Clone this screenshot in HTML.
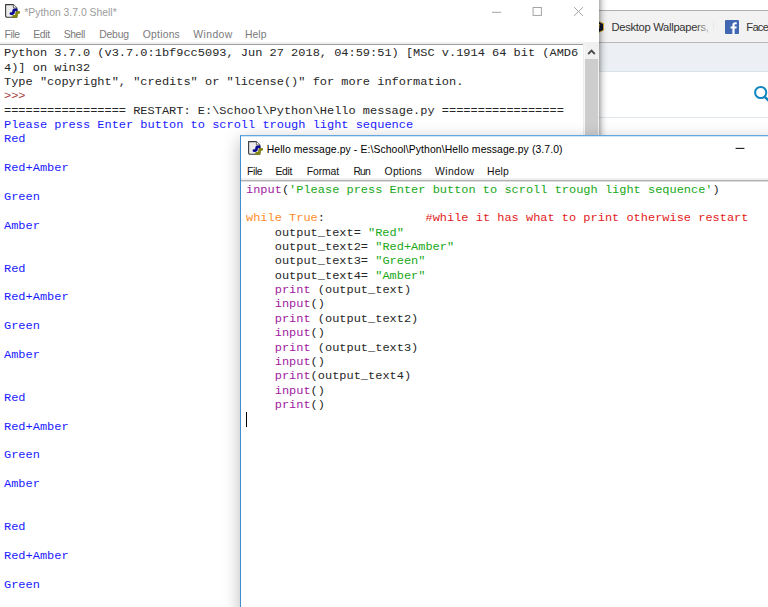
<!DOCTYPE html>
<html><head><meta charset="utf-8"><title>IDLE</title>
<style>
html,body{margin:0;padding:0;}
body{width:768px;height:607px;position:relative;overflow:hidden;background:#fff;font-family:"Liberation Sans",sans-serif;}
.abs{position:absolute;}
.ui{position:absolute;white-space:nowrap;font-family:"Liberation Sans",sans-serif;line-height:14px;}
pre{margin:0;font-family:"Liberation Mono",monospace;font-size:11px;line-height:14.365px;position:absolute;white-space:pre;transform-origin:0 0;transform:scaleX(1.0873);}
.b{color:#1a1aff;}
.k{color:#ff8c2a;}
.s{color:#18a818;}
.f{color:#a01aa0;}
.c{color:#e21a1a;}
.p{color:#a84040;}
</style></head><body>

<!-- browser behind -->
<div class="abs" id="browser" style="left:599px;top:0;width:169px;height:135px;background:#fff;">
  <div class="abs" style="left:0;top:10px;width:169px;height:1px;background:#b0b0b0;"></div>
  <div class="abs" style="left:0;top:11px;width:169px;height:31px;background:#f2f2f2;"></div>
  <div class="abs" style="left:0;top:42px;width:169px;height:1px;background:#b8b8b8;"></div>
  <div class="abs" style="left:0;top:43px;width:169px;height:28px;background:#ecf0f4;"></div>
  <div class="abs" style="left:0;top:71px;width:169px;height:1px;background:#dbe4ea;"></div>
  <div class="abs" style="left:0;top:117px;width:169px;height:1px;background:#dfe8ee;"></div>
  <!-- shield icon fragment -->
  <svg class="abs" style="left:-10px;top:19px;" width="16" height="16" viewBox="0 0 16 16"><path d="M1 4.2 L8 1.2 L15 4.2 L15 11.6 L8 14.8 L1 11.6 Z" fill="#d9aa35"/><path d="M2 4.9 L8 2.3 L14 4.9 L14 11 L8 13.7 L2 11 Z" fill="#0b1130"/><path d="M8.2 5 L11.3 5 L10.2 8 L11 8 L9 11.3 L9.4 8.8 L8.2 8.8 Z" fill="#c8962a"/></svg>
  <div class="ui" id="bm1" style="left:12.5px;top:19.5px;font-size:11.2px;letter-spacing:-0.3px;color:#333;">Desktop Wallpapers,</div>
  <div class="abs" style="left:96px;top:18px;width:14px;height:16px;background:linear-gradient(to right,rgba(242,242,242,0),rgba(242,242,242,0.75));"></div><div class="abs" style="left:114px;top:22px;width:1px;height:8px;background:#e9e9e9;"></div>
  <svg class="abs" style="left:126px;top:20px;" width="14" height="14" viewBox="0 0 14 14"><rect width="14" height="14" rx="1" fill="#4267b2"/><path d="M9.6 14 V8.6 h1.8 l0.3-2.1 H9.6 V5.2 c0-0.6 0.2-1 1-1 h1.1 V2.3 C11.5 2.3 10.9 2.2 10.1 2.2 c-1.6 0-2.7 1-2.7 2.8 v1.5 H5.6 v2.1 h1.8 V14 Z" fill="#fff"/></svg>
  <div class="ui" id="bm2" style="left:147.3px;top:19.5px;font-size:11.2px;letter-spacing:-0.75px;color:#333;">Facebook</div>
  <svg class="abs" style="left:152px;top:84px;" width="20" height="22" viewBox="0 0 20 22"><circle cx="9.7" cy="8.5" r="5.6" fill="none" stroke="#1186c0" stroke-width="2"/><path d="M13.8 12.8 L19 18" stroke="#1186c0" stroke-width="2.6" stroke-linecap="round"/></svg>
</div>

<!-- shell shadow -->
<div class="abs" style="left:599px;top:0;width:11px;height:140px;background:linear-gradient(to right,rgba(0,0,0,0.30) 0px,rgba(0,0,0,0.27) 1px,rgba(0,0,0,0.19) 2px,rgba(0,0,0,0.135) 3px,rgba(0,0,0,0.095) 4px,rgba(0,0,0,0.063) 5px,rgba(0,0,0,0.04) 6px,rgba(0,0,0,0.023) 7px,rgba(0,0,0,0.012) 8px,rgba(0,0,0,0.004) 9.5px,rgba(0,0,0,0) 11px);"></div>
<!-- shell window -->
<div class="abs" id="shell" style="left:0;top:0;width:599px;height:607px;background:#fff;">
  <!-- icon -->
  <svg class="abs" style="left:4px;top:3px;" width="17" height="17" viewBox="0 0 17 17">
    <path d="M1.6 1.6 H9.4 L12.8 5 V14.3 H3.2 Q1.6 14.3 1.6 12.7 Z" fill="#ececec" stroke="#3a3a3a" stroke-width="1.1" stroke-linejoin="round"/>
    <path d="M9.4 1.6 V5 H12.8" fill="#f8f8f8" stroke="#555" stroke-width="0.9"/>
    <path d="M12.3 6.9 L10.7 6.9 Q9.5 7 9.5 8.2 L9.5 9.1 Q9.5 10.5 8.1 10.6 L6.9 10.6" fill="none" stroke="#0b0b92" stroke-width="2.7" stroke-linecap="round" stroke-linejoin="round"/>
    <path d="M14.8 9.4 L13.6 9.4 Q12.5 9.5 12.5 10.7 L12.5 11.9 Q12.5 13.3 11.1 13.4 L9.5 13.4" fill="none" stroke="#858510" stroke-width="2.7" stroke-linecap="round" stroke-linejoin="round"/>
  </svg>
  <div class="ui" id="st" style="left:24.3px;top:5.9px;font-size:10.4px;color:#9c9c9c;">*Python 3.7.0 Shell*</div>
  <!-- window controls -->
  <svg class="abs" style="left:488px;top:3px;" width="100" height="18" viewBox="0 0 100 18"><path d="M4 9.3 H13.2" stroke="#a4a4a4" stroke-width="1" fill="none"/><rect x="45.1" y="4.5" width="8.3" height="7.9" fill="none" stroke="#a4a4a4" stroke-width="1"/><path d="M86 4.2 L95 12.8 M95 4.2 L86 12.8" stroke="#a4a4a4" stroke-width="1" fill="none"/></svg>
  <!-- menu -->
  <div class="ui m" style="left:4.6px;top:28px;font-size:10.4px;letter-spacing:-0.42px;color:#7a7a7a;">File</div>
  <div class="ui m" style="left:33.2px;top:28px;font-size:10.4px;letter-spacing:-0.3px;color:#7a7a7a;">Edit</div>
  <div class="ui m" style="left:63.7px;top:28px;font-size:10.4px;letter-spacing:-0.4px;color:#7a7a7a;">Shell</div>
  <div class="ui m" style="left:99.2px;top:28px;font-size:10.4px;letter-spacing:-0.18px;color:#7a7a7a;">Debug</div>
  <div class="ui m" style="left:142.8px;top:28px;font-size:10.4px;letter-spacing:0.2px;color:#7a7a7a;">Options</div>
  <div class="ui m" style="left:193.3px;top:28px;font-size:10.4px;letter-spacing:0.4px;color:#7a7a7a;">Window</div>
  <div class="ui m" style="left:244.9px;top:28px;font-size:10.4px;letter-spacing:0.1px;color:#7a7a7a;">Help</div>
  <div class="abs" style="left:0;top:42px;width:599px;height:3px;background:#f0f0f0;"></div>
  <div class="abs" style="left:0;top:44px;width:583px;height:1px;background:#9c9c9c;"></div>
  <!-- scrollbar -->
  <div class="abs" style="left:583px;top:45px;width:1px;height:562px;background:#ececec;"></div><div class="abs" style="left:584px;top:45px;width:1px;height:562px;background:#f7f7f7;"></div>
  <div class="abs" style="left:585px;top:45px;width:14px;height:562px;background:#f0f0f0;"></div>
  <div class="abs" style="left:585px;top:59px;width:13px;height:548px;background:#cdcdcd;"></div>
  <svg class="abs" style="left:587px;top:48px;" width="9" height="8" viewBox="0 0 9 8"><path d="M1.2 6 L4.5 2.6 L7.8 6" fill="none" stroke="#4a4a4a" stroke-width="1.8"/></svg>
  <!-- text -->
<pre id="sh" style="left:4px;top:46.3px;color:#262626;">Python 3.7.0 (v3.7.0:1bf9cc5093, Jun 27 2018, 04:59:51) [MSC v.1914 64 bit (AMD6
4)] on win32
Type "copyright", "credits" or "license()" for more information.
<span class="p">&gt;&gt;&gt; </span>
================= RESTART: E:\School\Python\Hello message.py =================
<span class="b">Please press Enter button to scroll trough light sequence
Red

Red+Amber

Green

Amber


Red

Red+Amber

Green

Amber


Red

Red+Amber

Green

Amber


Red

Red+Amber

Green

Amber</span></pre>
</div>

<!-- editor window -->
<div class="abs" id="editor" style="left:240px;top:135px;width:540px;height:480px;background:#fff;border:1px solid #3f8ccf;border-top-color:#62a8de;box-sizing:border-box;box-shadow:0 5px 16px rgba(0,0,0,0.28), inset 0 1px 0 rgba(98,168,222,0.3);">
  <svg class="abs" style="left:6px;top:4px;" width="17" height="17" viewBox="0 0 17 17">
    <path d="M1.6 1.6 H9.4 L12.8 5 V14.3 H3.2 Q1.6 14.3 1.6 12.7 Z" fill="#ececec" stroke="#3a3a3a" stroke-width="1.1" stroke-linejoin="round"/>
    <path d="M9.4 1.6 V5 H12.8" fill="#f8f8f8" stroke="#555" stroke-width="0.9"/>
    <path d="M12.3 6.9 L10.7 6.9 Q9.5 7 9.5 8.2 L9.5 9.1 Q9.5 10.5 8.1 10.6 L6.9 10.6" fill="none" stroke="#0b0b92" stroke-width="2.7" stroke-linecap="round" stroke-linejoin="round"/>
    <path d="M14.8 9.4 L13.6 9.4 Q12.5 9.5 12.5 10.7 L12.5 11.9 Q12.5 13.3 11.1 13.4 L9.5 13.4" fill="none" stroke="#858510" stroke-width="2.7" stroke-linecap="round" stroke-linejoin="round"/>
  </svg>
  <div class="ui" id="et" style="left:25.7px;top:6.6px;font-size:10.4px;letter-spacing:0.10px;color:#000;">Hello message.py - E:\School\Python\Hello message.py (3.7.0)</div>
  <svg class="abs" style="left:490px;top:8px;" width="20" height="10" viewBox="0 0 20 10"><path d="M4.6 4.4 H13.4" stroke="#1a1a1a" stroke-width="1.1" fill="none"/></svg>
  <div class="ui m2" style="left:6.1px;top:28.9px;font-size:10.4px;letter-spacing:-0.42px;color:#111;">File</div>
  <div class="ui m2" style="left:34.4px;top:28.9px;font-size:10.4px;letter-spacing:-0.3px;color:#111;">Edit</div>
  <div class="ui m2" style="left:65.8px;top:28.9px;font-size:10.4px;letter-spacing:-0.12px;color:#111;">Format</div>
  <div class="ui m2" style="left:112.5px;top:28.9px;font-size:10.4px;letter-spacing:-0.95px;color:#111;">Run</div>
  <div class="ui m2" style="left:143.6px;top:28.9px;font-size:10.4px;letter-spacing:0.2px;color:#111;">Options</div>
  <div class="ui m2" style="left:194px;top:28.9px;font-size:10.4px;letter-spacing:0.4px;color:#111;">Window</div>
  <div class="ui m2" style="left:246.1px;top:28.9px;font-size:10.4px;letter-spacing:0.1px;color:#111;">Help</div>
  <div class="abs" style="left:0;top:42px;width:540px;height:2px;background:#f0f0f0;"></div><div class="abs" style="left:0;top:44px;width:540px;height:1px;background:#b0b0b0;"></div><div class="abs" style="left:0;top:45px;width:540px;height:1px;background:#dedede;"></div>
<pre id="ed" style="left:5.2px;top:46.6px;color:#262626;"><span class="f">input</span>(<span class="s">'Please press Enter button to scroll trough light sequence'</span>)

<span class="k">while</span> <span class="k">True</span>:              <span class="c">#while it has what to print otherwise restart</span>
    output_text= <span class="s">"Red"</span>
    output_text2= <span class="s">"Red+Amber"</span>
    output_text3= <span class="s">"Green"</span>
    output_text4= <span class="s">"Amber"</span>
    <span class="f">print</span> (output_text)
    <span class="f">input</span>()
    <span class="f">print</span> (output_text2)
    <span class="f">input</span>()
    <span class="f">print</span> (output_text3)
    <span class="f">input</span>()
    <span class="f">print</span>(output_text4)
    <span class="f">input</span>()
    <span class="f">print</span>()
</pre>
  <div class="abs" style="left:5px;top:276px;width:1px;height:15px;background:#000;"></div>
</div>
</body></html>
